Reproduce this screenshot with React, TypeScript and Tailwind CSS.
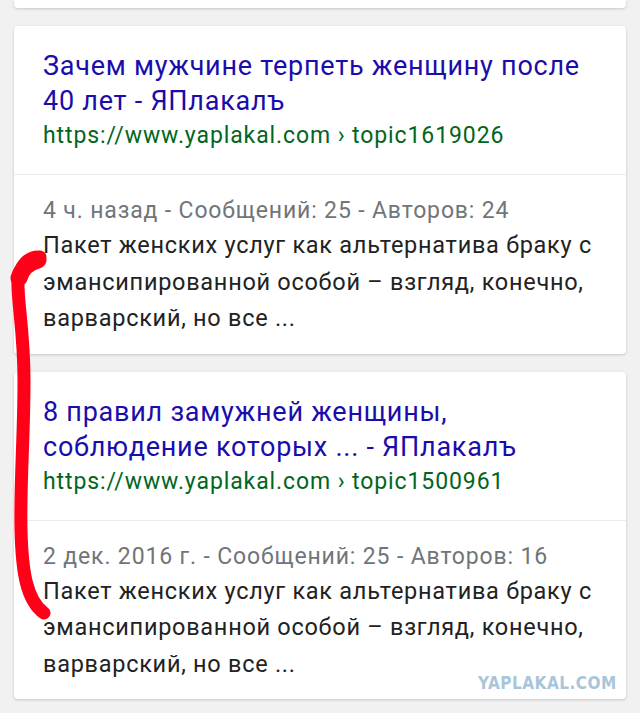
const results = [
  {
    title: ["Зачем мужчине терпеть женщину после", "40 лет - ЯПлакалъ"],
    url: "https://www.yaplakal.com › topic1619026",
    meta: "4 ч. назад - Сообщений: 25 - Авторов: 24",
  },
  {
    title: ["8 правил замужней женщины,", "соблюдение которых ... - ЯПлакалъ"],
    url: "https://www.yaplakal.com › topic1500961",
    meta: "2 дек. 2016 г. - Сообщений: 25 - Авторов: 16",
  },
];

const snippet = [
  "Пакет женских услуг как альтернатива браку с",
  "эмансипированной особой – взгляд, конечно,",
  "варварский, но все ...",
];

function ResultCard({ title, url, meta }: { title: string[]; url: string; meta: string }) {
  return (
    <div className="mx-[14px] rounded-[4px] bg-white shadow-[0_1px_3px_rgba(0,0,0,0.18)]">
      <div className="px-[29px] pt-[23px] pb-[22px]">
        <div className="text-[27px] leading-[35px] tracking-[0.75px] text-[#1a0dab]">
          {title.map((t) => (
            <div key={t}>{t}</div>
          ))}
        </div>
        <div className="mt-[1px] text-[23px] leading-[32px] tracking-[0.9px] text-[#006621]">{url}</div>
      </div>
      <div className="h-px bg-[#ebebeb]" />
      <div className="px-[29px] pt-[20px] pb-[17px]">
        <div className="text-[23px] leading-[32px] tracking-[0.85px] text-[#70757a]">{meta}</div>
        <div className="text-[23.5px] leading-[36.5px] tracking-[0.72px] text-[#222]">
          {snippet.map((s) => (
            <div key={s}>{s}</div>
          ))}
        </div>
      </div>
    </div>
  );
}

export default function App() {
  return (
    <div
      className="relative h-[713px] w-[640px] overflow-hidden bg-[#f1f1f1]"
      style={{ fontFamily: "Roboto, 'Noto Sans', sans-serif" }}
    >
      <div className="mx-[14px] h-[8px] rounded-b-[4px] bg-white shadow-[0_1px_3px_rgba(0,0,0,0.18)]" />
      <div className="flex flex-col gap-[18px] pt-[18px]">
        {results.map((r) => (
          <ResultCard key={r.url} {...r} />
        ))}
      </div>

      <div
        className="absolute left-[478px] top-[671px] text-[17px] font-black tracking-[0.5px] text-[#a9c5da]"
        style={{ fontFamily: "'DejaVu Sans Condensed', 'Liberation Sans Narrow', sans-serif" }}
      >
        YAPLAKAL.COM
      </div>

      <svg className="pointer-events-none absolute left-0 top-0" width="640" height="713">
        <g fill="none" stroke="#ff0018" strokeLinecap="round" strokeLinejoin="round">
          <path
            d="M40 257 C28 256 20 266 18 280 C17 300 24 330 24 380 C24 440 20 480 21 530 C22 570 26 600 44 613"
            strokeWidth="13"
          />
          <path d="M38 260 C30 262 22 268 19 278" strokeWidth="17" />
        </g>
      </svg>
    </div>
  );
}
